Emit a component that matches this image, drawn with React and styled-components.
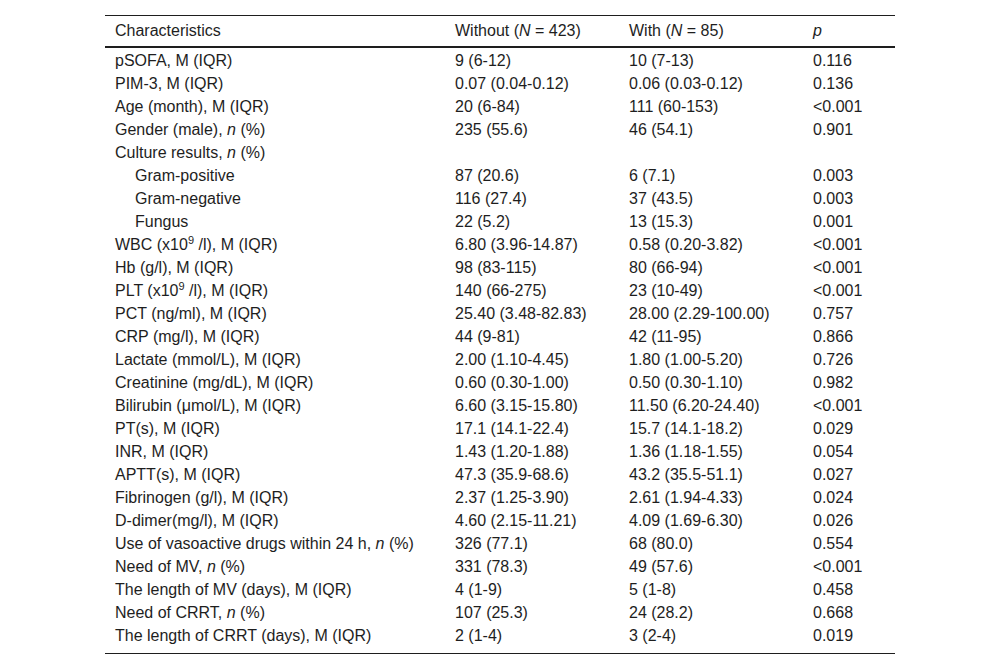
import React from "react";
import styled, { createGlobalStyle } from "styled-components";

const GlobalStyle = createGlobalStyle`
  html, body {
    margin: 0;
    padding: 0;
    background: #fff;
  }
  body {
    font-family: "Liberation Sans", Arial, sans-serif;
    color: #1e1e1e;
  }
`;

const Page = styled.div`
  width: 1000px;
  height: 668px;
  padding: 15px 0 0 105px;
  box-sizing: border-box;
`;

const Table = styled.table`
  width: 790px;
  border-collapse: collapse;
  font-size: 16px;
  line-height: 18px;
  border-top: 1px solid #1e1e1e;
  border-bottom: 1px solid #1e1e1e;
`;

const HeadRow = styled.tr`
  border-bottom: 2px solid #1e1e1e;
`;

const Th = styled.th`
  text-align: left;
  font-weight: normal;
  height: 31px;
  padding: 0 10px;
  box-sizing: border-box;
  vertical-align: middle;
  width: ${(p) => p.$w}px;
`;

const Td = styled.td`
  height: 23px;
  padding: 0 10px 0 ${(p) => (p.$indent ? 30 : 10)}px;
  box-sizing: border-box;
  vertical-align: middle;
  white-space: nowrap;
`;

const Spacer = styled.tr`
  height: ${(p) => p.$h}px;
`;

const Label = styled.span`
  sup {
    font-size: 11px;
    line-height: 0;
    vertical-align: 6px;
  }
`;

const rows = [
  ["pSOFA, M (IQR)", "9 (6-12)", "10 (7-13)", "0.116"],
  ["PIM-3, M (IQR)", "0.07 (0.04-0.12)", "0.06 (0.03-0.12)", "0.136"],
  ["Age (month), M (IQR)", "20 (6-84)", "111 (60-153)", "<0.001"],
  [<>Gender (male), <i>n</i> (%)</>, "235 (55.6)", "46 (54.1)", "0.901"],
  [<>Culture results, <i>n</i> (%)</>, "", "", ""],
  ["Gram-positive", "87 (20.6)", "6 (7.1)", "0.003", true],
  ["Gram-negative", "116 (27.4)", "37 (43.5)", "0.003", true],
  ["Fungus", "22 (5.2)", "13 (15.3)", "0.001", true],
  [<>WBC (x10<sup>9</sup> /l), M (IQR)</>, "6.80 (3.96-14.87)", "0.58 (0.20-3.82)", "<0.001"],
  ["Hb (g/l), M (IQR)", "98 (83-115)", "80 (66-94)", "<0.001"],
  [<>PLT (x10<sup>9</sup> /l), M (IQR)</>, "140 (66-275)", "23 (10-49)", "<0.001"],
  ["PCT (ng/ml), M (IQR)", "25.40 (3.48-82.83)", "28.00 (2.29-100.00)", "0.757"],
  ["CRP (mg/l), M (IQR)", "44 (9-81)", "42 (11-95)", "0.866"],
  ["Lactate (mmol/L), M (IQR)", "2.00 (1.10-4.45)", "1.80 (1.00-5.20)", "0.726"],
  ["Creatinine (mg/dL), M (IQR)", "0.60 (0.30-1.00)", "0.50 (0.30-1.10)", "0.982"],
  ["Bilirubin (μmol/L), M (IQR)", "6.60 (3.15-15.80)", "11.50 (6.20-24.40)", "<0.001"],
  ["PT(s), M (IQR)", "17.1 (14.1-22.4)", "15.7 (14.1-18.2)", "0.029"],
  ["INR, M (IQR)", "1.43 (1.20-1.88)", "1.36 (1.18-1.55)", "0.054"],
  ["APTT(s), M (IQR)", "47.3 (35.9-68.6)", "43.2 (35.5-51.1)", "0.027"],
  ["Fibrinogen (g/l), M (IQR)", "2.37 (1.25-3.90)", "2.61 (1.94-4.33)", "0.024"],
  ["D-dimer(mg/l), M (IQR)", "4.60 (2.15-11.21)", "4.09 (1.69-6.30)", "0.026"],
  [<>Use of vasoactive drugs within 24 h, <i>n</i> (%)</>, "326 (77.1)", "68 (80.0)", "0.554"],
  [<>Need of MV, <i>n</i> (%)</>, "331 (78.3)", "49 (57.6)", "<0.001"],
  ["The length of MV (days), M (IQR)", "4 (1-9)", "5 (1-8)", "0.458"],
  [<>Need of CRRT, <i>n</i> (%)</>, "107 (25.3)", "24 (28.2)", "0.668"],
  ["The length of CRRT (days), M (IQR)", "2 (1-4)", "3 (2-4)", "0.019"],
];

export default function App() {
  return (
    <>
      <GlobalStyle />
      <Page>
        <Table>
          <thead>
            <HeadRow>
              <Th $w={340}>Characteristics</Th>
              <Th $w={174}>
                Without (<i>N</i> = 423)
              </Th>
              <Th $w={184}>
                With (<i>N</i> = 85)
              </Th>
              <Th $w={92}>
                <i>p</i>
              </Th>
            </HeadRow>
          </thead>
          <tbody>
            <Spacer $h={2}>
              <td colSpan={4} />
            </Spacer>
            {rows.map(([label, a, b, p, indent], i) => (
              <tr key={i}>
                <Td $indent={indent}>
                  <Label>{label}</Label>
                </Td>
                <Td>{a}</Td>
                <Td>{b}</Td>
                <Td>{p}</Td>
              </tr>
            ))}
            <Spacer $h={6}>
              <td colSpan={4} />
            </Spacer>
          </tbody>
        </Table>
      </Page>
    </>
  );
}
